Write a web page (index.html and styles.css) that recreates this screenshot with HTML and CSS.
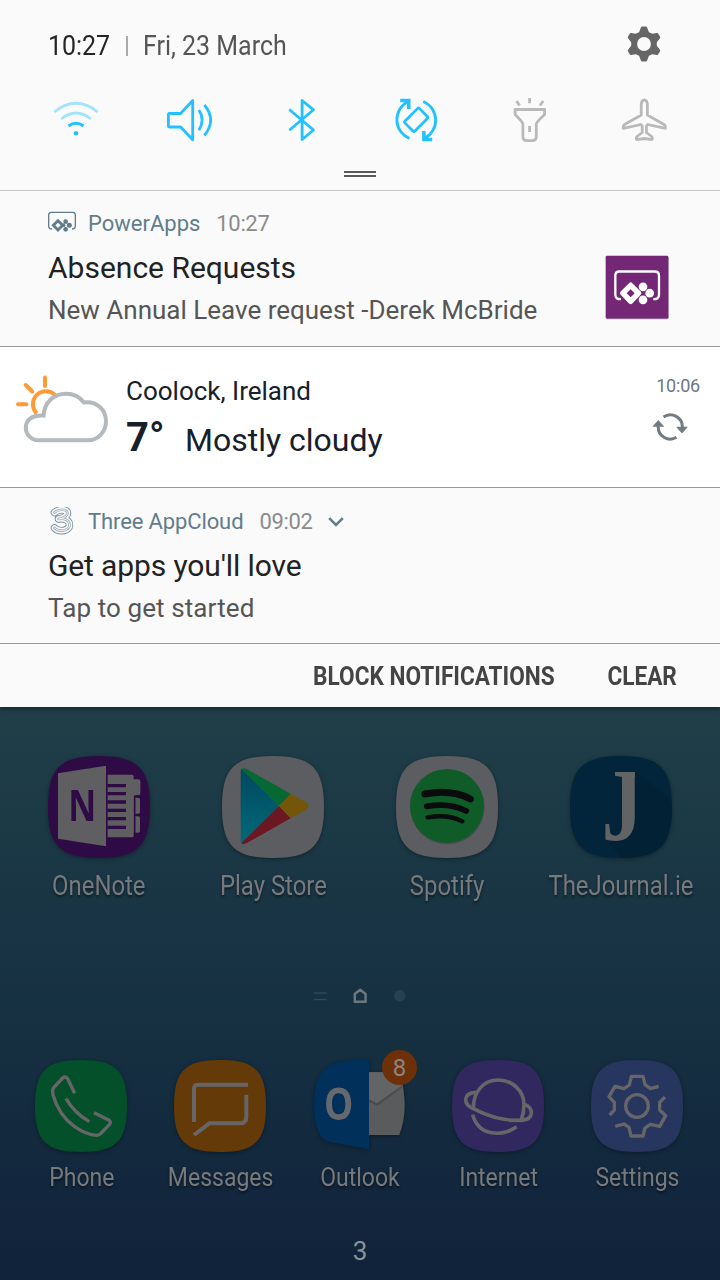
FILE: index.html
```html
<!DOCTYPE html>
<html lang="en">
<head>
<meta charset="utf-8">
<title>Notifications</title>
<link rel="stylesheet" href="styles.css">
</head>
<body>
<div class="phone">
  <section class="shade">
    <header class="quick">
      <div class="status">
        <span class="clock cond">10:27</span>
        <span class="divider"></span>
        <span class="date cond">Fri, 23 March</span>
        <svg class="gear" viewBox="626 26 36 36"><g fill="#666"><circle cx="644" cy="44" r="12.8"/><g id="tooth"><path d="M638.6 33.5L641 27.3Q641.3 26.5 642.2 26.5H645.8Q646.7 26.5 647 27.3L649.4 33.5V54.5L647 60.7Q646.7 61.5 645.8 61.5H642.2Q641.3 61.5 641 60.7L638.6 54.5Z"/></g><use href="#tooth" transform="rotate(60 644 44)"/><use href="#tooth" transform="rotate(120 644 44)"/></g><circle cx="644" cy="44" r="6.9" fill="#fafafa"/></svg>
      </div>
      <div class="toggles">
        <svg class="on" viewBox="50 96 52 48"><g opacity=".4"><path d="M54.3 112Q76 94.500 97.700 112"/><path d="M61.200 119Q76 107 90.800 119"/></g><path d="M68.500 126Q76 120.500 83.500 126"/><circle cx="76" cy="133.300" r="2.300" class="solid"/></svg>
        <svg class="on" viewBox="163.600 96 52 48"><path d="M192.300 100.500L180.200 113.500H169Q168 113.500 168 114.500V126Q168 127 169 127H180.200L192.300 139.700Z"/><path d="M198.500 110Q205 120 198.500 130.200M204 105Q216.500 120 204 135.500"/></svg>
        <svg class="on" viewBox="277.200 96 52 48"><path d="M289.500 109.500L313.700 130L302.300 139.500V100.500L313.700 109.800L289.500 130.200"/></svg>
        <svg class="on" viewBox="390.800 96 52 48"><path d="M409.300 138.500A20.300 20.300 0 0 1 408 101.500M423 101.500A20.300 20.300 0 0 1 424 138.500"/><rect x="409" y="109.500" width="14" height="20.500" rx="1.500" transform="rotate(45 416 119.800)"/><path class="arrow" d="M400 100.500H408.500V109M432 139.500H423.700V131"/></svg>
        <svg class="off" viewBox="504.400 96 52 48"><path d="M515.500 109.500H545V114.500Q537 122 536.700 124V136.500Q536.700 140.700 532.500 140.700H527.500Q523.300 140.700 523.300 136.500V124Q523 122 515.500 114.500ZM530 126V132M530 98V103.300M516.800 101L520 105.500M543.600 101L540.400 105.500"/></svg>
        <svg class="off" viewBox="618 96 52 48"><path d="M644.300 100C642.200 100 641.200 103 641.200 106V115L625 124.200Q623 125.500 623.200 128.300L641 124.500L642.200 126V132.500L637 136.500Q635.500 138.500 637 139.700L644.300 138.500L651.600 139.700Q653.100 138.500 651.600 136.500L646.400 132.500V126L647.600 124.500L665.400 128.300Q665.600 125.500 663.600 124.200L647.400 115V106C647.400 103 646.400 100 644.300 100Z"/></svg>
      </div>
      <div class="handle"></div>
    </header>

    <article class="note note-power">
      <div class="note-text">
        <div class="note-head">
          <svg class="app-icon" viewBox="144 34 84 84" fill="none" stroke="#607d8b" stroke-width="4"><path d="M156 88Q146 88 146 78V46Q146 38 154 38H218Q226 38 226 46V78Q226 88 216 88"/><g stroke="none" fill="#607d8b"><path fill-rule="evenodd" d="M174 57L194 77L174 97L154 77ZM174 69L166 77L174 85L182 77Z"/><circle cx="197" cy="66" r="7"/><circle cx="208" cy="77" r="7.500"/><circle cx="197" cy="89" r="7"/><circle cx="190" cy="77" r="6"/></g></svg>
          <span class="app-name name-power">PowerApps</span><span class="time time-power">10:27</span>
        </div>
        <h2><span class="t-absence">Absence Requests</span></h2>
        <p><span class="t-leave">New Annual Leave request -Derek McBride</span></p>
      </div>
      <svg class="large-icon" viewBox="735 45 192 194"><rect x="738" y="49" width="188" height="188" rx="5" fill="#a79ca8"/><rect x="737" y="47" width="188" height="188" rx="4" fill="#742774"/><path d="M783 177Q766 178 766 164V106Q766 94 778 94H884Q897 94 897 106V164Q897 178 880 177" fill="none" stroke="#fff" stroke-width="7"/><g fill="#fff"><path fill-rule="evenodd" d="M807 129Q812 124 817 129L842 154Q847 159 842 164L817 190Q812 195 807 190L782 164Q777 159 782 154ZM812 147L800 159L812 171L824 159Z"/><circle cx="849" cy="140" r="13"/><circle cx="869" cy="159" r="13"/><circle cx="849" cy="179" r="13"/></g></svg>
    </article>

    <article class="note weather">
      <svg class="sky" viewBox="14 372 98 74" fill="none" stroke-width="4"><g stroke="#ff9a35"><path stroke-linecap="round" d="M45 377.500V386M25.700 385L32.300 391.500M18 404.300H26.500"/><path d="M36.800 413.500A12.600 12.600 0 1 1 55 395"/></g><path stroke="#b3b9bd" fill="#fff" d="M38.500 440.300C31.500 440.300 25.800 434.800 25.800 427.500C25.800 420 32 414.500 43.500 415.500C44.500 402 54 393.700 66 393.700C73.500 393.700 80 397 84 402.500C97 401 106 410 106 421C106 432 98 440.300 87.500 440.300Z"/></svg>
      <div class="forecast">
        <div class="place"><span class="t-place">Coolock, Ireland</span></div>
        <div class="now"><b>7°</b><span class="t-cloudy">Mostly cloudy</span></div>
      </div>
      <div class="updated">
        <span>10:06</span>
        <svg viewBox="652 411 36 32"><path d="M663.500 417A12 12 0 0 1 682.300 427.500M676.500 437.300A12 12 0 0 1 658.300 426" fill="none" stroke="#737a80" stroke-width="3"/><path d="M676 426.700H688L682 433.500ZM652.300 426.700H664.300L658.300 420Z" fill="#737a80"/></svg>
      </div>
    </article>

    <article class="note note-three">
      <div class="note-text">
        <div class="note-head">
          <svg class="app-icon" viewBox="48 507 28 28" fill="none" stroke-linecap="round" stroke-linejoin="round"><g id="swirl"><path d="M54.500 512.500C59 508.500 68 509 67.500 513.500C67 517 61 518.500 58.500 519C65 518 69.500 520.500 69.500 525C69.500 531 59 532.500 54.500 528"/></g><use href="#swirl" stroke="#78909c" stroke-width="7.500"/><use href="#swirl" stroke="#fafafa" stroke-width="5.700"/><use href="#swirl" stroke="#9fb0b9" stroke-width="2.600"/><use href="#swirl" stroke="#fafafa" stroke-width="1"/></svg>
          <span class="app-name name-three">Three AppCloud</span><span class="time time-three">09:02</span>
          <svg class="chevron" viewBox="0 0 16 10"><path d="M1.200 1.200L8 8L14.800 1.200" fill="none" stroke="#607d8b" stroke-width="2.600"/></svg>
        </div>
        <h2><span class="t-apps">Get apps you'll love</span></h2>
        <p><span class="t-tap">Tap to get started</span></p>
      </div>
    </article>

    <footer class="actions">
      <span class="cond act-block">BLOCK NOTIFICATIONS</span>
      <span class="cond act-clear">CLEAR</span>
    </footer>
  </section>

  <main class="home">
    <div class="apps">
      <div class="app">
        <svg viewBox="54 47 306 306"><path fill="#2f0b46" d="M207 47C323 47 360 84 360 200S323 353 207 353S54 316 54 200S91 47 207 47Z"/><g fill="#5f5e61"><path d="M84 99L228 76V318L84 295Z"/><path d="M233 103H306Q311 103 311 108V117H325Q331 117 331 123V159Q331 165 325 165H316V172H325Q330 172 330 177V215Q330 220 325 220H316V228H325Q330 228 330 233V272Q330 277 325 277H311V286Q311 291 306 291H233Z"/></g><path d="M232 136H288M232 160H288M232 185H288M232 210H288M232 235H288M232 261H288" stroke="#2f0b46" stroke-width="10"/><path d="M314 166V280M312 168H331M312 224H331" stroke="#2f0b46" stroke-width="5" fill="none"/><text class="letter-n" x="157" y="242" textLength="84" lengthAdjust="spacingAndGlyphs" text-anchor="middle">N</text></svg>
        <span class="label"><i class="cond l-onenote">OneNote</i></span>
      </div>
      <div class="app">
        <svg viewBox="576 47 306 306"><defs><linearGradient id="cyan" x2="0" y2="1"><stop stop-color="#00485f"/><stop offset="1" stop-color="#006a78"/></linearGradient></defs><path fill="#5c5d60" d="M729 47C845 47 882 84 882 200S845 353 729 353S576 316 576 200S613 47 729 47Z"/><path fill="url(#cyan)" d="M632 92Q632 85 640 88L747 197L640 309Q632 311 632 304Z"/><path fill="#046933" d="M634 87Q639 81 648 85L782 160L747 197Z"/><path fill="#6c1822" d="M634 309Q640 314 649 309L782 234L747 197Z"/><path fill="#735607" d="M782 160L828 186Q842 197 828 208L782 234L747 197Z"/></svg>
        <span class="label"><i class="cond l-play">Play Store</i></span>
      </div>
      <div class="app">
        <svg viewBox="48 47 306 306"><path fill="#5c5d60" d="M201 47C317 47 354 84 354 200S317 353 201 353S48 316 48 200S85 47 201 47Z"/><circle cx="202" cy="200" r="112" fill="#4b4d4f"/><circle cx="201" cy="197" r="111" fill="#105c28"/><g fill="none" stroke="#090b0c" stroke-linecap="round"><path stroke-width="21" d="M135 161Q214 146 271 176"/><path stroke-width="17" d="M140 198Q211 186 259 212"/><path stroke-width="13" d="M143 231Q204 221 247 243"/></g></svg>
        <span class="label"><i class="cond l-spotify">Spotify</i></span>
      </div>
      <div class="app">
        <svg class="journal" viewBox="570 47 306 306"><path fill="#02253c" d="M723 47C839 47 876 84 876 200S839 353 723 353S570 316 570 200S607 47 723 47Z"/><path fill="#032135" d="M765 92L862 170Q886 200 866 270Q850 353 723 353L685 302Q740 310 765 250Z"/><text class="letter-j" x="727" y="298" textLength="124" lengthAdjust="spacingAndGlyphs" text-anchor="middle">J</text><path fill="#02253c" d="M765 80H800V122L765 94Z"/><path fill="#032135" d="M765 92L800 120V140H765Z"/></svg>
        <span class="label"><i class="cond l-journal">TheJournal.ie</i></span>
      </div>
    </div>

    <svg class="pager" viewBox="310 986 100 20"><path d="M314 993H326.500M314 999.500H326.500" stroke="#2f4a5a" stroke-width="1.600"/><path d="M354.800 1001.800V994L360.200 989.800L365.600 994V1001.800Z" fill="none" stroke="#6d7980" stroke-width="2.400" stroke-linejoin="round"/><circle cx="399.700" cy="995.700" r="5.700" fill="#26414f"/></svg>

    <div class="dock">
      <div class="app">
        <svg viewBox="45 58 276 276"><path fill="#03502a" d="M183 58C288 58 321 91 321 196S288 334 183 334S45 301 45 196S78 58 183 58Z"/><g class="line" stroke-width="10"><path d="M164 158L143 114Q136 105 128 112L101 141Q96 147 99 163Q117 225 163 257Q198 282 230 284Q237 284 242 279L268 252Q275 244 266 238L222 216M138 174Q162 216 208 243"/></g></svg>
        <span class="label"><i class="cond l-phone">Phone</i></span>
      </div>
      <div class="app">
        <svg viewBox="462 58 276 276"><path fill="#643a08" d="M600 58C705 58 738 91 738 196S705 334 600 334S462 301 462 196S495 58 600 58Z"/><g class="line" stroke-width="12"><path d="M684 132H534Q522 132 522 144V244M679 162V228Q679 248 659 248H568L522 283"/></g></svg>
        <span class="label"><i class="cond l-messages">Messages</i></span>
      </div>
      <div class="app outlook">
        <svg viewBox="69 58 276 276"><path fill="#5a5b5d" d="M237 95H330Q344 150 344 196Q344 240 328 283H237Z"/><path fill="#4b4c4e" d="M237 176L261 188L338 133V139L263 195L237 183Z"/><path fill="#636466" d="M237 95H332L336 134L261 187L237 174Z"/><path fill="#01305a" d="M237 58V326L108 302C80 280 72 240 72 196C72 91 105 60 205 58Z"/><text class="letter-o" x="146" y="237" textLength="88" lengthAdjust="spacingAndGlyphs" text-anchor="middle">O</text></svg>
        <span class="badge">8</span>
        <span class="label"><i class="cond l-outlook">Outlook</i></span>
      </div>
      <div class="app">
        <svg viewBox="486 58 276 276"><path fill="#31285f" d="M624 58C729 58 762 91 762 196S729 334 624 334S486 301 486 196S519 58 624 58Z"/><g class="line" stroke-width="11"><path d="M550 205C549 152 582 118 624 118C667 118 702 150 702 192Q702 216 694 236M557 155C520 157 517 189 550 204C600 231 655 241 696 239C733 235 730 202 706 192M548 222C568 290 637 287 680 258"/></g></svg>
        <span class="label"><i class="cond l-internet">Internet</i></span>
      </div>
      <div class="app">
        <svg viewBox="93 238 276 276"><path fill="#26365f" d="M231 238C336 238 369 271 369 376S336 514 231 514S93 481 93 376S126 238 231 238Z"/><g class="line" stroke-width="10"><circle cx="231" cy="376" r="34"/><path d="M149 403L163 388V365L147 348L165 317L192 324L208 313L214 287H249L255 312L271 324L296 317M315 349L299 365V388L317 405L299 437L271 431L255 442L249 466H213L207 440L192 430L166 437"/></g></svg>
        <span class="label"><i class="cond l-settings">Settings</i></span>
      </div>
    </div>
    <div class="count">3</div>
  </main>
</div>
</body>
</html>
```
FILE: styles.css
```css
* { box-sizing: border-box; }
body { margin: 0; font-family: Roboto, sans-serif; }
svg { display: block; flex: none; }
.phone { width: 720px; height: 1280px; overflow: hidden; display: flex; flex-direction: column; background: linear-gradient(#203f48 707px, #1a3645 880px, #152f40 1050px, #12263d 1200px, #11223b 1280px); }
.cond { display: inline-block; transform: scaleX(.885); font-style: normal; white-space: nowrap; }

.shade { background: #fafafa; height: 707px; flex: none; box-shadow: 0 1px 5px rgba(0,0,0,.5); }
.quick { height: 191px; border-bottom: 1px solid #c9c9c9; padding-top: 26px; }
.status { display: flex; align-items: center; height: 38px; padding: 0 58px 0 48px; font-size: 28px; line-height: 38px; }
.status .cond { transform: scaleX(.891); transform-origin: left; padding-top: 2px; }
.clock { width: 78px; color: #252525; }
.divider { width: 2px; height: 20px; background: #aaa; margin-top: 1px; }
.date { margin-left: 15px; color: #555; }
.gear { width: 36px; height: 36px; margin: -2px 0 0 auto; }
.toggles { display: grid; grid-template-columns: repeat(6, 113.600px); padding: 0 19.200px; margin-top: 32px; justify-items: center; }
.toggles svg { width: 52px; height: 48px; fill: none; stroke-width: 2.800; stroke-linejoin: round; }
.on { stroke: #22c1ff; }
.off { stroke: #b9b9b9; }
.toggles .solid { fill: #22c1ff; stroke: none; }
.toggles .arrow { stroke-width: 3.600; stroke-linejoin: miter; }
.handle { width: 32px; height: 6px; margin: 27px auto 0; border: solid #5a5a5a; border-width: 2px 0; }

.note { display: flex; border-bottom: 1px solid #999; }
.note-power, .note-three { height: 156px; padding: 17px 51px 0 48px; justify-content: space-between; }
.note-three { padding-top: 18px; }
.note-head { display: flex; align-items: center; height: 32px; font-size: 22px; line-height: 32px; }
.app-icon { width: 28px; height: 28px; margin-right: 12px; }
.note-power .app-icon { margin-top: 2px; }
.note-three .app-icon { margin-top: -2px; }
.app-name { color: #607d8b; }
.name-three { letter-spacing: -.12px; }
.time { color: #8b8b8b; margin-left: 16px; letter-spacing: -.35px; }
.chevron { width: 16px; height: 10px; margin-left: 16px; }
.note h2 { margin: 8px 0 0; font-size: 30px; font-weight: 400; line-height: 40px; color: #222; white-space: nowrap; }
.note p { margin: 4px 0 0; font-size: 26px; line-height: 36px; color: #555; white-space: nowrap; }
.t-apps { letter-spacing: -.12px; }
.t-tap { letter-spacing: .1px; }
.large-icon { width: 64px; height: 65px; margin-top: 47px; }

.weather { height: 141px; background: #fff; color: #16202b; padding: 25px 20px 0 14px; }
.sky { width: 98px; height: 74px; }
.forecast { margin-left: 14px; }
.place { font-size: 26px; line-height: 38px; }
.now { display: flex; align-items: baseline; margin-top: 3px; font-size: 32px; line-height: 50px; white-space: nowrap; }
.now b { font-size: 40px; width: 59px; }
.updated { margin-left: auto; display: flex; flex-direction: column; align-items: flex-end; font-size: 18px; line-height: 28px; letter-spacing: -.2px; color: #70777d; }
.updated svg { width: 36px; height: 32px; margin: 11px 12px 0 0; }

.actions { height: 63px; display: flex; justify-content: flex-end; padding-right: 43px; font-size: 26px; font-weight: 700; line-height: 64px; color: #444; }
.actions .cond { transform-origin: right; transform: scaleX(.87); }
.act-clear { margin-left: 42px; }

.home { padding-top: 49px; }
.apps { display: grid; grid-template-columns: repeat(4, 174px); padding-left: 12px; }
.dock { display: grid; grid-template-columns: repeat(5, 139px); padding-left: 11.500px; margin-top: 54px; }
.app { display: flex; flex-direction: column; align-items: center; position: relative; }
.app svg { filter: drop-shadow(0 1px 2px rgba(0,0,0,.35)); overflow: visible; }
.apps svg { width: 102px; height: 102px; }
.dock svg { width: 92px; height: 92px; }
.label { font-size: 27px; line-height: 32px; color: #777a7c; text-shadow: 0 2px 3px rgba(0,0,0,.5); margin-top: 12px; }
.dock .label { font-size: 26px; margin: 9px 0 0 1px; }
.line { fill: none; stroke: #666668; stroke-linejoin: round; }
.letter-n { font: 700 131px "Open Sans", sans-serif; fill: #2f0b46; }
.letter-j { font: 700 308px "Liberation Serif", serif; fill: #626365; }
.letter-o { font: 700 136px "Open Sans", sans-serif; fill: #65696d; }
.badge { position: absolute; left: 92.500px; top: -10px; width: 35px; height: 35px; border-radius: 50%; background: #6d3009; color: #8a8580; font-size: 24px; line-height: 36px; text-align: center; }
.pager { width: 100px; height: 20px; margin: 84px 0 0 310px; }
.count { text-align: center; font-size: 26px; line-height: 32px; margin-top: 42px; color: #8b939c; }
```
